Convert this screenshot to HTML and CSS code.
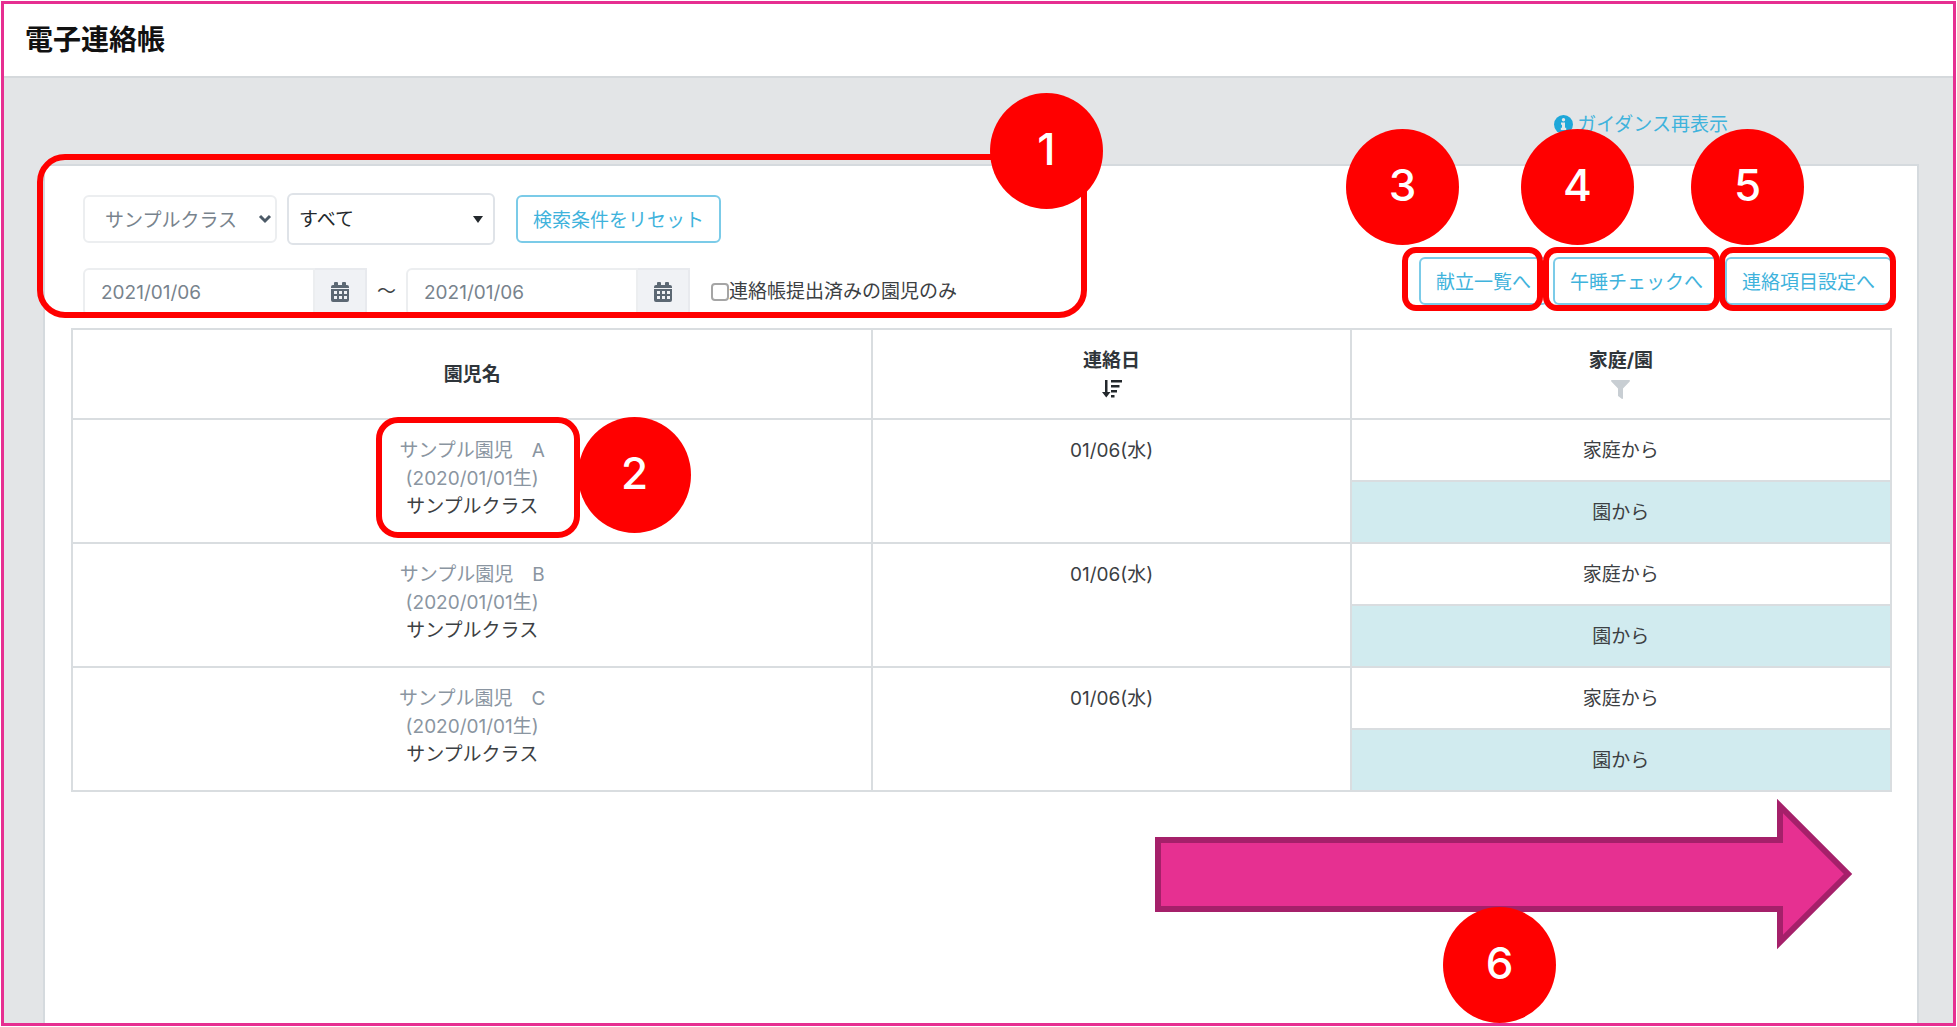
FILE: index.html
```html
<!DOCTYPE html>
<html lang="ja">
<head>
<meta charset="utf-8">
<title>電子連絡帳</title>
<meta name="viewport" content="width=device-width, initial-scale=1">
<link rel="stylesheet" href="styles.css">
</head>
<body>
<svg class="sprite" aria-hidden="true">
  <symbol id="calendar" viewBox="0 0 18 20">
    <path d="M4 0h2a1 1 0 0 1 1 1v2h4V1a1 1 0 0 1 1-1h2a1 1 0 0 1 1 1v2h1a2 2 0 0 1 2 2v1H0V5a2 2 0 0 1 2-2h1V1a1 1 0 0 1 1-1z"/>
    <path fill-rule="evenodd" d="M0 7h18v11a2 2 0 0 1-2 2H2a2 2 0 0 1-2-2zM3 9v3h3V9zM8 9v3h3V9zM13 9v3h3V9zM3 14v3h3v-3zM8 14v3h3v-3zM13 14v3h3v-3z"/>
  </symbol>
</svg>
<div class="frame">
  <header class="page-header"><h1>電子連絡帳</h1></header>
  <main class="page">
    <div class="guide">
      <a class="guide-link" href="#">
        <svg width="19" height="19" viewBox="0 0 19 19" aria-hidden="true"><circle cx="9.5" cy="9.5" r="9.5" fill="#1ea7d9"/><circle cx="9.5" cy="4.7" r="1.7" fill="#e3e5e7"/><path d="M7 7.5h4v5.200h1.200V15H6.800v-2.300H8V9.700H7z" fill="#e3e5e7"/></svg>
        <span>ガイダンス再表示</span>
      </a>
    </div>
    <section class="card">
      <div class="toolbar">
        <form class="filters">
          <div class="filter-row">
            <span class="select select-class">
              <select aria-label="クラス"><option>サンプルクラス</option></select>
              <svg width="14" height="10" viewBox="0 0 14 10" aria-hidden="true"><path d="M2 2l5 5 5-5" fill="none" stroke="#4c5a67" stroke-width="3"/></svg>
            </span>
            <span class="select select-all">
              <select aria-label="園児"><option>すべて</option></select>
              <svg width="10" height="7" viewBox="0 0 10 7" aria-hidden="true"><path d="M0 0h10L5 7z" fill="#23282c"/></svg>
            </span>
            <button class="button reset" type="button">検索条件をリセット</button>
          </div>
          <div class="filter-row">
            <div class="date">
              <input type="text" value="2021/01/06" aria-label="開始日">
              <button type="button" aria-label="開始日を選択"><svg width="18" height="20"><use href="#calendar"/></svg></button>
            </div>
            <span class="tilde">〜</span>
            <div class="date">
              <input type="text" value="2021/01/06" aria-label="終了日">
              <button type="button" aria-label="終了日を選択"><svg width="18" height="20"><use href="#calendar"/></svg></button>
            </div>
            <label class="check"><input type="checkbox">連絡帳提出済みの園児のみ</label>
          </div>
        </form>
        <div class="actions">
          <button class="button" type="button">献立一覧へ</button>
          <button class="button" type="button">午睡チェックへ</button>
          <button class="button" type="button">連絡項目設定へ</button>
        </div>
      </div>
      <table class="records">
        <colgroup><col class="col-name"><col class="col-date"><col class="col-from"></colgroup>
        <thead>
          <tr>
            <th>園児名</th>
            <th>連絡日
              <span class="th-icon"><svg width="20" height="18" viewBox="0 0 20 18" aria-hidden="true"><path d="M3 0h2.500v12H8.500L4.250 17.500 0 12h3zM9 0h11v2.500H9zM9 5h8.500v2.500H9zM9 10h6v2.500H9zM9 15h3.500v2.500H9z" fill="#23282c"/></svg></span>
            </th>
            <th>家庭/園
              <span class="th-icon"><svg width="19" height="19" viewBox="0 0 19 19" aria-hidden="true"><path d="M.8 0h17.400c.8 0 1 .9.500 1.400L12 8.500v9.700c0 .7-.7 1-1.300.6L7.400 16.300c-.3-.2-.4-.5-.4-.8v-7L.3 1.400C-.2.900 0 0 .8 0z" fill="#c8ced3"/></svg></span>
            </th>
          </tr>
        </thead>
        <tbody>
          <tr>
            <td rowspan="2"><a href="#">サンプル園児　A<br>(2020/01/01生)</a><br>サンプルクラス</td>
            <td rowspan="2">01/06(水)</td>
            <td class="from">家庭から</td>
          </tr>
          <tr><td class="from school">園から</td></tr>
          <tr>
            <td rowspan="2"><a href="#">サンプル園児　B<br>(2020/01/01生)</a><br>サンプルクラス</td>
            <td rowspan="2">01/06(水)</td>
            <td class="from">家庭から</td>
          </tr>
          <tr><td class="from school">園から</td></tr>
          <tr>
            <td rowspan="2"><a href="#">サンプル園児　C<br>(2020/01/01生)</a><br>サンプルクラス</td>
            <td rowspan="2">01/06(水)</td>
            <td class="from">家庭から</td>
          </tr>
          <tr><td class="from school">園から</td></tr>
        </tbody>
      </table>
    </section>
  </main>
</div>
<div class="annotations">
  <div class="outline outline-1"></div>
  <div class="outline outline-2"></div>
  <div class="outline outline-3"></div>
  <div class="outline outline-4"></div>
  <div class="outline outline-5"></div>
  <svg class="arrow" width="698" height="152" viewBox="0 0 698 152" aria-hidden="true"><path d="M3 41H625V7L693 75 625 143V110H3z" fill="#e63091" stroke="#a5206a" stroke-width="6"/></svg>
  <div class="badge badge-1">1</div>
  <div class="badge badge-2">2</div>
  <div class="badge badge-3">3</div>
  <div class="badge badge-4">4</div>
  <div class="badge badge-5">5</div>
  <div class="badge badge-6">6</div>
</div>
</body>
</html>
```
FILE: styles.css
```css
* { box-sizing: border-box; }

body {
  position: relative;
  display: flex;
  min-height: 100vh;
  margin: 0;
  padding: 1px;
  background: #fff;
  color: #3c4043;
  font: 19px/28px Inter, "Noto Sans CJK JP", sans-serif;
}

button, input, select { font: inherit; }

.sprite { position: absolute; width: 0; height: 0; }

.frame {
  flex: 1;
  display: flex;
  flex-direction: column;
  border: 3px solid #e62f91;
}

.page-header {
  padding: 15px 21px;
  border-bottom: 2px solid #d5d9dc;
}

.page-header h1 {
  margin: 0;
  color: #111;
  font-size: 28px;
  line-height: 42px;
  font-weight: 700;
}

.page {
  flex: 1;
  display: flex;
  flex-direction: column;
  padding: 32px 34px 0 39px;
  background: #e3e5e7;
}

.guide {
  display: flex;
  justify-content: flex-end;
  padding-right: 191px;
  margin-bottom: 26px;
}

.guide-link {
  display: flex;
  align-items: center;
  gap: 4px;
  color: #3fb3dc;
  text-decoration: none;
}
.guide-link span { padding-top: 2px; line-height: 26px; }

.card {
  flex: 1;
  padding: 27px 25px 27px 26px;
  border: 2px solid #d5dade;
  border-bottom: 0;
  background: #fff;
}

.toolbar {
  display: flex;
  justify-content: space-between;
  align-items: flex-end;
  margin-bottom: 12px;
}

.filters {
  display: flex;
  flex-direction: column;
  gap: 23px;
  padding-left: 12px;
}

.filter-row { display: flex; align-items: center; }

.select { position: relative; display: flex; }

.select select {
  width: 100%;
  border: 2px solid #eceef0;
  border-radius: 6px;
  background: #fff;
  appearance: none;
}

.select svg { position: absolute; top: 0; bottom: 0; margin: auto 0; pointer-events: none; }

.select-class { width: 194px; margin-right: 10px; }
.select-class select { height: 48px; padding: 3px 20px 0; color: #78838d; }
.select-class svg { right: 5px; }

.select-all { width: 208px; margin-right: 21px; }
.select-all select { height: 52px; padding: 2px 10px 0; border-color: #dfe3e8; color: #23282c; }
.select-all svg { right: 12px; }

.button {
  height: 48px;
  padding: 3px 15px 0;
  border: 2px solid #7bcbe8;
  border-radius: 6px;
  background: #fff;
  color: #3fb3dc;
  white-space: nowrap;
}

.date { display: flex; width: 284px; height: 48px; }

.date input {
  flex: 1;
  min-width: 0;
  padding: 2px 16px 0;
  border: 2px solid #eceef0;
  border-radius: 6px 0 0 6px;
  color: #78838d;
}

.date button {
  display: flex;
  align-items: center;
  justify-content: center;
  width: 52px;
  padding: 0;
  border: 2px solid #e8eaee;
  border-left: 0;
  background: #f0f2f5;
  color: #5c6873;
}

.date svg { fill: #5c6873; }

.tilde { width: 39px; text-align: center; }

.check { display: flex; align-items: center; margin-left: 21px; }
.check input {
  width: 18px;
  height: 18px;
  margin: 0;
  border: 2px solid #a5a5a5;
  border-radius: 4px;
  background: #fff;
  appearance: none;
}
.check input:checked { background: #3fb3dc; }

.actions { display: flex; gap: 5px; margin-bottom: 11px; }

.records {
  width: 100%;
  border-collapse: collapse;
  table-layout: fixed;
  text-align: center;
}

.col-name { width: 799px; width: 44%; }
.col-date { width: 26.3%; }
.col-from { width: 29.7%; }

.records th, .records td { border: 2px solid #d9dde0; }
.records th { height: 90px; padding: 2px 0 0; color: #2f353a; font-weight: 700; }
.records td { padding: 17px 12px; vertical-align: top; }
.records td.from { height: 62px; padding: 17px 12px 15px; }
.records td.school { background: #d1ebef; }
.records a { color: #8a95a1; text-decoration: none; }

.th-icon { display: flex; align-items: center; justify-content: center; height: 28px; }

/* Numbered guide marks laid over the screen */
.annotations { position: absolute; inset: 0; pointer-events: none; }

.outline { position: absolute; border: 6px solid #f00; }
.outline-1 { left: 37px; top: 154px; width: 1050px; height: 164px; border-radius: 28px; }
.outline-2 { left: 376px; top: 417px; width: 204px; height: 121px; border-radius: 22px; }
.outline-3, .outline-4, .outline-5 { top: 247px; height: 64px; border-radius: 14px; }
.outline-3 { right: 414px; width: 141px; }
.outline-4 { right: 237px; width: 177px; }
.outline-5 { right: 61px; width: 177px; }

.badge {
  position: absolute;
  display: flex;
  align-items: center;
  justify-content: center;
  width: 113px;
  height: 116px;
  padding-bottom: 4px;
  border-radius: 50%;
  background: #f00;
  color: #fff;
  font-size: 44px;
  line-height: 56px;
  font-weight: 500;
}
.badge-1 { left: 990px; top: 93px; }
.badge-2 { left: 578px; top: 417px; }
.badge-3 { right: 498px; top: 129px; }
.badge-4 { right: 323px; top: 129px; }
.badge-5 { right: 153px; top: 129px; }
.badge-6 { right: 401px; top: 907px; }

.arrow { position: absolute; right: 104px; top: 799px; }
```
